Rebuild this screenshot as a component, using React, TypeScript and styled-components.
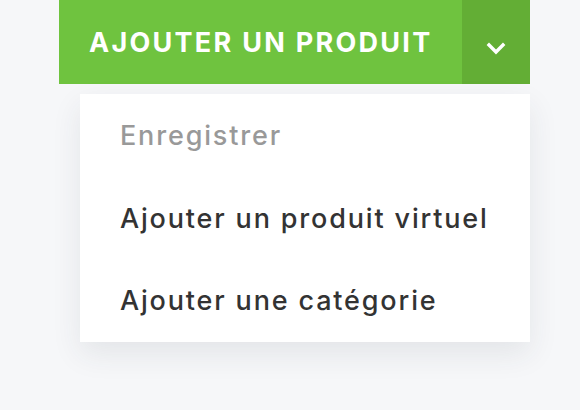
import React from "react";
import styled, { createGlobalStyle } from "styled-components";

const Global = createGlobalStyle`
  html, body { margin: 0; padding: 0; background: #f6f7f9; }
  body { font-family: Inter, "Noto Sans", sans-serif; }
`;

const Page = styled.div`
  width: 580px;
  height: 410px;
  padding-left: 59px;
  box-sizing: border-box;
  display: flex;
  flex-direction: column;
  align-items: flex-start;
`;

const Wrapper = styled.div`
  width: 471px;
  display: flex;
  flex-direction: column;
  align-items: flex-end;
  gap: 10px;
`;

const SplitButton = styled.div`
  width: 100%;
  height: 84px;
  display: flex;
`;

const MainButton = styled.button`
  flex: 1;
  border: 0;
  margin: 0;
  background: #6fc33f;
  color: #fff;
  font-family: Inter, sans-serif;
  font-weight: 700;
  font-size: 27px;
  letter-spacing: 0.084em;
  text-align: left;
  padding: 0 0 0 30px;
  display: flex;
  align-items: center;
`;

const CaretButton = styled.button`
  width: 68px;
  border: 0;
  margin: 0;
  padding: 14px 0 0 0;
  background: #63ae35;
  display: flex;
  align-items: center;
  justify-content: center;
`;

const Menu = styled.ul`
  list-style: none;
  margin: 0;
  padding: 0;
  width: 450px;
  background: #fff;
  box-shadow: 0 12px 28px rgba(40, 50, 70, 0.09);
  display: flex;
  flex-direction: column;
`;

const Item = styled.li<{ $muted?: boolean }>`
  height: 82.7px;
  display: flex;
  align-items: center;
  padding-left: 40px;
  font-family: Inter, sans-serif;
  font-weight: 500;
  font-size: 27px;
  letter-spacing: 0.068em;
  color: ${(p) => (p.$muted ? "#999999" : "#333333")};
`;

export default function App() {
  return (
    <>
      <Global />
      <Page>
        <Wrapper>
          <SplitButton>
            <MainButton>AJOUTER UN PRODUIT</MainButton>
            <CaretButton>
              <svg width="20" height="14" viewBox="0 0 20 14" fill="none">
                <path d="M1.8 1.8 L10 10 L18.2 1.8" stroke="#fff" strokeWidth="3.4" strokeLinecap="butt" strokeLinejoin="miter" />
              </svg>
            </CaretButton>
          </SplitButton>
          <Menu>
            <Item $muted>Enregistrer</Item>
            <Item>Ajouter un produit virtuel</Item>
            <Item>Ajouter une catégorie</Item>
          </Menu>
        </Wrapper>
      </Page>
    </>
  );
}
